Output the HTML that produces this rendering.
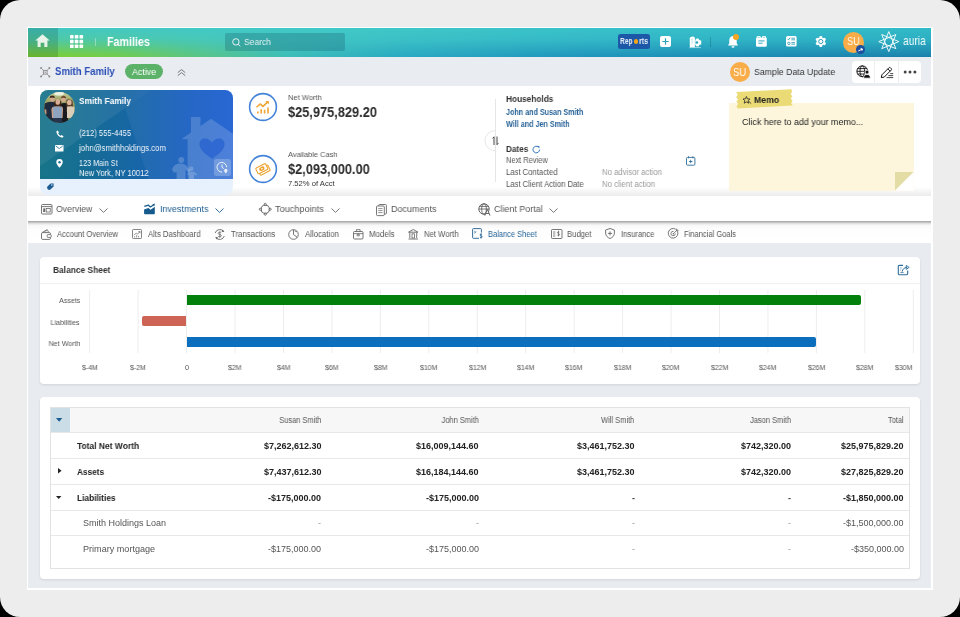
<!DOCTYPE html>
<html><head><meta charset="utf-8">
<style>
*{box-sizing:border-box}
html,body{margin:0;padding:0}
body{width:960px;height:617px;overflow:hidden;background:#000;font-family:"Liberation Sans",sans-serif;position:relative}
.a{position:absolute}
.t{position:absolute;white-space:nowrap;line-height:1;will-change:transform}
svg{position:absolute;overflow:visible}
</style></head>
<body>
<div class="a" style="left:0;top:0;width:960px;height:617px;background:#ededed;border-radius:20px"></div><div class="a" style="left:27px;top:27px;width:906px;height:563px;background:#fff"></div><div class="a" style="left:28px;top:28px;width:903px;height:560px;background:#e8ebf0"></div><div class="a" style="left:28px;top:28px;width:903px;height:29px;background:linear-gradient(90deg,#80d02c 0px,#74cc48 90px,#58c48a 180px,#3cbdb8 260px,#2aa8c2 380px,#1f94bc 560px,#1a80ac 903px)"></div><div class="a" style="left:28px;top:28px;width:903px;height:29px;background:linear-gradient(90deg,#44c8c2 0px,#42c8c6 300px,#38c0ca 600px,#32bac8 903px);-webkit-mask-image:linear-gradient(180deg,#000 0%,rgba(0,0,0,0.8) 40%,rgba(0,0,0,0) 100%);mask-image:linear-gradient(180deg,#000 0%,rgba(0,0,0,0.8) 40%,rgba(0,0,0,0) 100%)"></div><div class="a" style="left:28px;top:28px;width:30px;height:29px;background:rgba(0,40,30,0.16)"></div><svg style="left:35px;top:34.2px" width="15" height="13.5" viewBox="0 0 15 14"><path d="M7.5 0.3 L15 6.8 L12.6 6.8 L12.6 13.6 L9.4 13.6 L9.4 9.2 L5.6 9.2 L5.6 13.6 L2.4 13.6 L2.4 6.8 L0 6.8 Z" fill="#e8f4ea"/></svg><svg style="left:70.2px;top:35.4px" width="13" height="13"><rect x="0.00" y="0.00" width="3.6" height="3.6" rx="0.7" fill="#fff"/><rect x="0.00" y="4.75" width="3.6" height="3.6" rx="0.7" fill="#fff"/><rect x="0.00" y="9.50" width="3.6" height="3.6" rx="0.7" fill="#fff"/><rect x="4.75" y="0.00" width="3.6" height="3.6" rx="0.7" fill="#fff"/><rect x="4.75" y="4.75" width="3.6" height="3.6" rx="0.7" fill="#fff"/><rect x="4.75" y="9.50" width="3.6" height="3.6" rx="0.7" fill="#fff"/><rect x="9.50" y="0.00" width="3.6" height="3.6" rx="0.7" fill="#fff"/><rect x="9.50" y="4.75" width="3.6" height="3.6" rx="0.7" fill="#fff"/><rect x="9.50" y="9.50" width="3.6" height="3.6" rx="0.7" fill="#fff"/></svg><div class="a" style="left:95px;top:38px;width:1px;height:8px;background:rgba(255,255,255,0.35)"></div><div class="t" style="left:106.75px;top:36.00px;font-size:12.06px;transform:scaleX(0.890);transform-origin:0 0;color:#fff;font-weight:bold;">Families</div><div class="a" style="left:225px;top:33px;width:120px;height:18px;background:rgba(20,80,100,0.26);border-radius:2px"></div><svg style="left:232px;top:37.5px" width="9" height="9" viewBox="0 0 9 9"><circle cx="3.9" cy="3.9" r="3.2" fill="none" stroke="rgba(255,255,255,0.85)" stroke-width="1"/><path d="M6.2 6.2 L8.3 8.3" stroke="rgba(255,255,255,0.85)" stroke-width="1"/></svg><div class="t" style="left:244.00px;top:37.00px;font-size:9.52px;transform:scaleX(0.895);transform-origin:0 0;color:rgba(255,255,255,0.85);">Search</div><div class="a" style="left:618px;top:34px;width:32.4px;height:15.4px;background:#1d58a8;border-radius:2.5px"></div><div class="t" style="left:620.00px;top:37.00px;font-size:8.30px;transform:scaleX(0.804);transform-origin:0 0;color:#e8f0fa;font-weight:bold;">Rep</div><div class="t" style="left:638.90px;top:37.00px;font-size:8.30px;transform:scaleX(0.858);transform-origin:0 0;color:#e8f0fa;font-weight:bold;">rts</div><div class="a" style="left:633.5px;top:39px;width:4.9px;height:4.9px;border-radius:50%;background:#f5a417"></div><div class="a" style="left:660px;top:36px;width:11px;height:11px;background:#fff;border-radius:2px"></div><svg style="left:660px;top:36px" width="11" height="11"><path d="M5.5 2.3V8.7M2.3 5.5H8.7" stroke="#2aa3b8" stroke-width="1.2"/></svg><svg style="left:689px;top:35.5px" width="13" height="12" viewBox="0 0 13 12"><path d="M0.8 11.2 V2.2 C0.8 1.6 1.2 1.1 1.8 0.9 L3.6 0.5 C4.6 0.5 5.9 1.1 5.9 2 V11.2 Z" fill="#fff"/><path d="M2.4 3.6 L3.8 3 M2.4 5.4 L3.8 4.8 M2.4 7.2 L3.8 6.6" stroke="rgba(40,160,180,0.55)" stroke-width="0.7"/><path d="M8.6 2.6 L9.9 2.8 L10.2 3.9 L11.3 4.4 L12.2 4.2 V6.6 L12.2 8.8 L11.3 8.6 L10.2 9.1 L9.9 10.2 L8.6 10.4 L7.2 10.2 L6.3 9 V4 L7.2 2.8 Z" fill="#fff"/><circle cx="7.9" cy="6.5" r="1.3" fill="#22a2b8"/><path d="M0.5 11.6 H11.8" stroke="rgba(255,255,255,0.7)" stroke-width="0.8"/></svg><div class="a" style="left:710px;top:37px;width:1px;height:10px;background:rgba(0,60,80,0.25)"></div><svg style="left:726.5px;top:35px" width="12" height="13" viewBox="0 0 12 13"><path d="M6 1 C3.3 1 2.3 3.2 2.3 5.5 V8.3 L1 10.4 H11 L9.7 8.3 V5.5 C9.7 3.2 8.7 1 6 1 Z" fill="#fff"/><path d="M4.4 11.2 A1.6 1.6 0 0 0 7.6 11.2 Z" fill="#fff"/></svg><div class="a" style="left:732.6px;top:33.6px;width:6.2px;height:6.2px;border-radius:50%;background:#f5a623"></div><svg style="left:756px;top:36.3px" width="11" height="11" viewBox="0 0 11 11"><rect x="0" y="1.6" width="10.8" height="9.2" rx="1.4" fill="#fff"/><path d="M1.2 2.2 V0.6 H4.2 V2.2 M6.6 2.2 V0.6 H9.6 V2.2" stroke="#fff" stroke-width="1" fill="none"/><path d="M2.4 4.9H8.4M2.4 7.2H6.6" stroke="#22a0b8" stroke-width="0.9"/></svg><svg style="left:785.8px;top:36.4px" width="11" height="11" viewBox="0 0 11 11"><rect x="0" y="0" width="10.6" height="10.6" rx="1.5" fill="#fff"/><path d="M1.5 2.8 L2.5 3.8 L4.2 1.8" stroke="#1f98b2" stroke-width="0.9" fill="none"/><path d="M5.4 2.2H9M5.4 3.8H9M5.4 6.6H9M5.4 8.2H9" stroke="#1f98b2" stroke-width="0.8"/><circle cx="2.9" cy="7.4" r="1.2" fill="none" stroke="#1f98b2" stroke-width="0.8"/></svg><svg style="left:814.8px;top:36.3px" width="11.6" height="11" viewBox="-5.8 -5.5 11.6 11"><g fill="#fff"><circle r="4.1"/><g id="tt"><rect x="-1.5" y="-5.5" width="3" height="3" rx="1.1"/></g><use href="#tt" transform="rotate(60)"/><use href="#tt" transform="rotate(120)"/><use href="#tt" transform="rotate(180)"/><use href="#tt" transform="rotate(240)"/><use href="#tt" transform="rotate(300)"/></g><circle r="2.1" fill="none" stroke="#1f98b2" stroke-width="0.9"/></svg><div class="a" style="left:843px;top:31.5px;width:21px;height:21px;border-radius:50%;background:#f9ad48"></div><div class="t" style="left:846.50px;top:36.00px;font-size:10.68px;transform:scaleX(0.876);transform-origin:0 0;color:#fff8ee;">SU</div><div class="a" style="left:856.3px;top:44.6px;width:9px;height:9px;border-radius:50%;background:#1d4fa0"></div><svg style="left:856.3px;top:44.6px" width="9" height="9"><path d="M2.3 6 L6.2 4.1 M4.6 3.4 L6.4 4 L5.9 5.8" stroke="#fff" stroke-width="1" fill="none"/></svg><svg style="left:866px;top:29px" width="45" height="26"><path d="M22.80 2.60 L29.87 19.67 M29.87 5.53 L22.80 22.60 M32.80 12.60 L15.73 19.67 M29.87 19.67 L12.80 12.60 M22.80 22.60 L15.73 5.53 M15.73 19.67 L22.80 2.60 M12.80 12.60 L29.87 5.53 M15.73 5.53 L32.80 12.60 " stroke="#fff" stroke-width="0.9" fill="none" stroke-linejoin="round"/></svg><div class="t" style="left:903.20px;top:35.00px;font-size:11.99px;transform:scaleX(0.855);transform-origin:0 0;color:#f0fbfb;">auria</div><div class="a" style="left:28px;top:57px;width:903px;height:29px;background:#e9ecf1"></div><svg style="left:40px;top:66.5px" width="10.5" height="10.5" viewBox="0 0 10.5 10.5"><path d="M1.2 1.2 L3.6 3.6M9.3 1.2 L6.9 3.6M1.2 9.3 L3.6 6.9M9.3 9.3 L6.9 6.9" stroke="#999" stroke-width="0.9"/><circle cx="1.1" cy="1.1" r="1" fill="#8a8a8a"/><circle cx="9.4" cy="1.1" r="1" fill="#8a8a8a"/><circle cx="1.1" cy="9.4" r="1" fill="#8a8a8a"/><circle cx="9.4" cy="9.4" r="1" fill="#8a8a8a"/><rect x="3.4" y="3.4" width="3.7" height="3.7" fill="none" stroke="#8a8a8a" stroke-width="0.9"/><rect x="4.5" y="4.5" width="1.5" height="1.5" fill="#aaa"/></svg><div class="t" style="left:55.30px;top:66.00px;font-size:11.12px;transform:scaleX(0.863);transform-origin:0 0;color:#2c4fb6;font-weight:bold;">Smith Family</div><div class="a" style="left:125px;top:64.2px;width:37.5px;height:15.3px;border-radius:8px;background:#5db26a"></div><div class="t" style="left:131.70px;top:67.00px;font-size:9.67px;transform:scaleX(0.916);transform-origin:0 0;color:#fff;">Active</div><svg style="left:176.5px;top:68.5px" width="9" height="7"><path d="M0.8 3.6 L4.5 0.6 L8.2 3.6M0.8 6.6 L4.5 3.6 L8.2 6.6" stroke="#777" stroke-width="1" fill="none"/></svg><div class="a" style="left:729.6px;top:61.8px;width:20.6px;height:20.6px;border-radius:50%;background:#f9ad48"></div><div class="t" style="left:733.30px;top:68.00px;font-size:10.39px;transform:scaleX(0.908);transform-origin:0 0;color:#fff;">SU</div><div class="t" style="left:753.75px;top:67.00px;font-size:9.67px;transform:scaleX(0.906);transform-origin:0 0;color:#333;">Sample Data Update</div><div class="a" style="left:852px;top:60.7px;width:68.7px;height:21.9px;border-radius:4px;background:#fff"></div><div class="a" style="left:874px;top:61px;width:1px;height:21.6px;background:#eceef2"></div><div class="a" style="left:898.3px;top:61px;width:1px;height:21.6px;background:#eceef2"></div><svg style="left:856px;top:65px" width="15" height="13" viewBox="0 0 15 13"><circle cx="6.3" cy="6.3" r="5.4" fill="none" stroke="#111" stroke-width="1"/><ellipse cx="6.3" cy="6.3" rx="2.3" ry="5.4" fill="none" stroke="#111" stroke-width="0.9"/><path d="M0.9 6.3H11.7M1.6 3.6H11M1.6 9H8" stroke="#111" stroke-width="0.9"/><path d="M7.6 13.2 C7.6 10.4 9.1 9.5 11 9.5 C12.9 9.5 14.4 10.4 14.4 13.2 Z" fill="#111" stroke="#fff" stroke-width="0.8"/><circle cx="11" cy="7.1" r="2" fill="#111" stroke="#fff" stroke-width="0.8"/></svg><svg style="left:879.5px;top:65.5px" width="14" height="13" viewBox="0 0 14 13"><path d="M1.3 11.6 L1.9 8.8 L8.9 1.8 C9.4 1.3 10 1.3 10.5 1.8 L11.2 2.5 C11.7 3 11.7 3.6 11.2 4.1 L4.2 11.1 Z M7.8 2.9 L10.1 5.2" stroke="#111" stroke-width="1" fill="none" stroke-linejoin="round"/><path d="M10.2 7.6H13.2M8.4 9.6H13.2M6.6 11.6H13.2" stroke="#222" stroke-width="0.85"/></svg><svg style="left:902.5px;top:70px" width="14" height="4"><circle cx="2.2" cy="1.9" r="1.5" fill="#444"/><circle cx="7" cy="1.9" r="1.5" fill="#444"/><circle cx="11.9" cy="1.9" r="1.5" fill="#444"/></svg><div class="a" style="left:28px;top:86px;width:903px;height:110px;background:linear-gradient(180deg,#fff 0,#fff 101px,#f6f6f6 105px,#ebebeb 110px)"></div><div class="a" style="left:40px;top:89.6px;width:193px;height:105.6px;border-radius:8px;background:#e7f1fd;overflow:hidden"><div class="a" style="left:0;top:0;width:193px;height:89.2px;background:linear-gradient(90deg,#177488 0%,#16689e 40%,#1a5fc0 75%,#1e5fd2 100%)"></div><svg style="left:0;top:0" width="193" height="90"><path d="M0 0 L112 0 L0 76 Z" fill="rgba(255,255,255,0.07)"/><path d="M85 18 L112 0 L193 0 L193 90 L109 90 Z" fill="rgba(255,255,255,0.05)"/></svg></div><svg style="left:172px;top:117px" width="61" height="62" viewBox="0 0 61 62"><path d="M9.2 22.2 L19 15.5 V0 H28.5 V8.9 L39 1.8 L61 16.8 V62 H15.6 V22.2 Z" fill="rgba(255,255,255,0.17)"/><path d="M40 42 C33 36.5 27.5 33 27.5 27 C27.5 23.6 30.2 21.6 33.2 21.6 C36.2 21.6 38.4 23.4 40 25.6 C41.6 23.4 43.8 21.6 46.8 21.6 C49.8 21.6 52.5 23.6 52.5 27 C52.5 33 47 36.5 40 42 Z" fill="rgba(25,85,205,0.55)"/><circle cx="9.3" cy="43" r="3" fill="rgba(255,255,255,0.2)"/><path d="M0 52.5 C1.5 48.2 4.6 46.6 8.6 46.6 C12.4 46.6 14.4 48.6 16.4 51.4 L18.6 53.8 L17 55.4 L13.6 52.8 V62 H4.6 V55.2 L1.6 55.4 Z" fill="rgba(255,255,255,0.2)"/><circle cx="19.2" cy="51.8" r="2.3" fill="rgba(255,255,255,0.2)"/><path d="M15 57.2 L17.2 54.8 H22 L25.2 57.2 L24.2 58.4 L22 57.2 V62 H17 V58.2 Z" fill="rgba(255,255,255,0.2)"/></svg><div class="a" style="left:214px;top:158.8px;width:16.6px;height:16.8px;border-radius:2.5px;background:rgba(255,255,255,0.22)"></div><svg style="left:216px;top:161px" width="13" height="13" viewBox="0 0 13 13"><path d="M10.6 6.2 A4.8 4.8 0 1 0 6.2 11" fill="none" stroke="rgba(255,255,255,0.85)" stroke-width="1"/><path d="M6 3.4 V6.3 L7.8 7.6" stroke="rgba(255,255,255,0.85)" stroke-width="1" fill="none"/><path d="M9.8 12.4 C8.6 11 8.1 10.2 8.1 9.4 A1.7 1.7 0 0 1 11.5 9.4 C11.5 10.2 11 11 9.8 12.4 Z" fill="rgba(255,255,255,0.85)"/></svg><svg style="left:44px;top:91.9px" width="31" height="31" viewBox="0 0 31 31"><defs><clipPath id="pc"><circle cx="15.45" cy="15.45" r="15.45"/></clipPath><linearGradient id="bg1" x1="0" y1="0" x2="0" y2="1"><stop offset="0" stop-color="#d6dcb8"/><stop offset="0.25" stop-color="#a4ac6c"/><stop offset="0.6" stop-color="#848e52"/><stop offset="1" stop-color="#6a7448"/></linearGradient></defs>
<g clip-path="url(#pc)"><g><rect x="-2" y="-2" width="35" height="35" fill="url(#bg1)"/>
<ellipse cx="15" cy="1" rx="5" ry="2.6" fill="#eef0e0"/>
<path d="M0.4 11.4 Q4 9.6 8.4 9.8 Q11.6 10 12 12 L12 31 H0 Z" fill="#1f2b3c"/>
<path d="M0.4 18 L2.2 17 L2.6 22 L1 22.6 Z" fill="#c49a80"/>
<ellipse cx="8.2" cy="6.8" rx="2.5" ry="2.9" fill="#d0a68c"/><path d="M5.6 6 Q5.8 3.6 8.2 3.6 Q10.8 3.6 10.9 6 Q8.2 4.8 5.6 6 Z" fill="#3a281c"/>
<ellipse cx="19.4" cy="7.1" rx="2.5" ry="2.9" fill="#d2a88e"/><path d="M16.8 6.4 Q17 3.8 19.4 3.8 Q22 3.8 22.1 6.4 Q19.4 5 16.8 6.4 Z" fill="#6a4a2c"/>
<path d="M16.6 11.8 Q20 10.4 24 11.6 L24 31 H16.6 Z" fill="#191b21"/>
<path d="M22.4 8 Q25.6 6.2 28.6 8.8 L29.4 20 H22.6 Z" fill="#5e4230"/>
<ellipse cx="25.3" cy="10.4" rx="2.3" ry="2.7" fill="#dcb49a"/>
<path d="M23 14.8 Q26.6 13.6 30.4 15 L31 26 H23 Z" fill="#dccdb8"/>
<path d="M10.4 9.4 Q13.8 5.8 17.2 9.4 L17.4 17 H10.2 Z" fill="#3e271a"/>
<ellipse cx="13.8" cy="9.9" rx="2.3" ry="2.8" fill="#d8ae94"/>
<path d="M7.4 17 Q8 14.6 10 14.4 L17.6 14.4 Q19 14.6 19 17 L18.6 26 H8 Z" fill="#c9a08a"/>
<path d="M9 15.2 Q13.8 13.8 18 15.2 L17.8 26.2 H9.4 Z" fill="#8ea3bf"/>
<path d="M9.2 26 H18 L18.2 33 H9.2 Z" fill="#28344c"/>
</g></g></svg><div class="t" style="left:78.90px;top:96.00px;font-size:9.81px;transform:scaleX(0.853);transform-origin:0 0;color:#fff;font-weight:bold;">Smith Family</div><div class="t" style="left:78.90px;top:129.00px;font-size:9.23px;transform:scaleX(0.826);transform-origin:0 0;color:#f2f6fb;">(212) 555-4455</div><div class="t" style="left:79.09px;top:144.00px;font-size:9.23px;transform:scaleX(0.842);transform-origin:0 0;color:#f2f6fb;">john@smithholdings.com</div><div class="t" style="left:78.90px;top:159.00px;font-size:9.23px;transform:scaleX(0.786);transform-origin:0 0;color:#f2f6fb;">123 Main St</div><div class="t" style="left:78.90px;top:169.00px;font-size:9.23px;transform:scaleX(0.818);transform-origin:0 0;color:#f2f6fb;">New York, NY 10012</div><svg style="left:55.5px;top:130px" width="8" height="8" viewBox="0 0 8 8"><path d="M1.6 0.4 L3 2.3 L2.2 3.2 C2.7 4.4 3.6 5.3 4.8 5.8 L5.7 5 L7.6 6.4 L6.8 7.6 C3.5 7.6 0.4 4.5 0.4 1.2 Z" fill="#fff"/></svg><svg style="left:55px;top:145px" width="8.5" height="6.5" viewBox="0 0 8.5 6.5"><rect x="0" y="0" width="8.5" height="6.5" rx="0.6" fill="#fff"/><path d="M0.7 0.9 L4.25 3.6 L7.8 0.9" stroke="#1b6e98" stroke-width="0.8" fill="none"/></svg><svg style="left:56px;top:158.8px" width="7" height="9" viewBox="0 0 7 9"><path d="M3.5 8.8 C1.6 6.6 0.3 4.9 0.3 3.3 A3.2 3.2 0 0 1 6.7 3.3 C6.7 4.9 5.4 6.6 3.5 8.8 Z" fill="#fff"/><circle cx="3.5" cy="3.3" r="1.2" fill="#1b6e98"/></svg><svg style="left:47px;top:183px" width="7" height="7" viewBox="0 0 7 7"><path d="M0.4 3.6 L3.6 0.4 H6.6 V3.4 L3.4 6.6 C2.6 7.2 1.6 7 0.8 6.2 C0 5.4 -0.1 4.4 0.4 3.6 Z" fill="#1d5b93"/><circle cx="4.9" cy="2.1" r="0.75" fill="#e9f1fc"/></svg><svg style="left:246.8px;top:91.20px" width="32" height="32"><circle cx="16" cy="16" r="13.4" fill="none" stroke="#4383d8" stroke-width="1.6"/></svg><svg style="left:246.8px;top:153.00px" width="32" height="32"><circle cx="16" cy="16" r="13.4" fill="none" stroke="#4383d8" stroke-width="1.6"/></svg><svg style="left:255px;top:99px" width="16" height="16" viewBox="0 0 16 16"><path d="M1.5 8.2 L5.2 4.9 L8 7.4 L13 2.6" stroke="#f0a431" stroke-width="1.5" fill="none"/><path d="M10.4 2.1 H13.8 V5.5 Z" fill="#f0a431"/><path d="M2.8 12.5V14.6M6.2 10.2V14.6M9.6 10.8V14.6M13 8.6V14.6" stroke="#f0a431" stroke-width="1.6"/></svg><svg style="left:254px;top:161px" width="18" height="16" viewBox="0 0 18 16"><g transform="rotate(-27 9 8)"><rect x="4" y="6.2" width="11" height="6.4" rx="1" fill="#fff" stroke="#f0a431" stroke-width="1.1"/><rect x="2.6" y="4" width="11" height="6.4" rx="1" fill="#fff" stroke="#f0a431" stroke-width="1.1"/><ellipse cx="8.1" cy="7.2" rx="2.9" ry="2" fill="#f0a431"/><circle cx="8.1" cy="7.2" r="0.8" fill="#fff"/></g></svg><div class="t" style="left:287.70px;top:94.00px;font-size:7.78px;transform:scaleX(0.972);transform-origin:0 0;color:#555;">Net Worth</div><div class="t" style="left:287.70px;top:105.00px;font-size:14.90px;transform:scaleX(0.859);transform-origin:0 0;color:#2c2c2c;font-weight:bold;">$25,975,829.20</div><div class="t" style="left:287.70px;top:151.00px;font-size:7.78px;transform:scaleX(0.957);transform-origin:0 0;color:#555;">Available Cash</div><div class="t" style="left:287.70px;top:162.00px;font-size:14.90px;transform:scaleX(0.858);transform-origin:0 0;color:#2c2c2c;font-weight:bold;">$2,093,000.00</div><div class="t" style="left:287.70px;top:180.00px;font-size:7.63px;color:#333;">7.52% of Acct</div><div class="a" style="left:494.8px;top:99px;width:0.8px;height:83px;background:#e6e6e6"></div><svg style="left:484px;top:130px" width="12" height="22"><path d="M11 0.7 A10 10 0 0 0 11 20.7" fill="#fff" stroke="#e3e3e3" stroke-width="0.9"/></svg><svg style="left:491.5px;top:136px" width="7" height="9.5" viewBox="0 0 7 9.5"><path d="M2 9 V0.8 L0.6 2.4M5 0.5 V8.7 L6.4 7.1" stroke="#444" stroke-width="1" fill="none"/></svg><div class="t" style="left:505.60px;top:95.00px;font-size:8.94px;transform:scaleX(0.927);transform-origin:0 0;color:#333;font-weight:bold;">Households</div><div class="t" style="left:505.60px;top:108.00px;font-size:8.79px;transform:scaleX(0.817);transform-origin:0 0;color:#2a6498;font-weight:bold;">John and Susan Smith</div><div class="t" style="left:505.60px;top:120.00px;font-size:8.65px;transform:scaleX(0.831);transform-origin:0 0;color:#2a6498;font-weight:bold;">Will and Jen Smith</div><div class="t" style="left:505.75px;top:145.00px;font-size:8.65px;transform:scaleX(0.944);transform-origin:0 0;color:#333;font-weight:bold;">Dates</div><svg style="left:531.5px;top:144.5px" width="9" height="9" viewBox="0 0 9 9"><path d="M7.6 4.6 A3.3 3.3 0 1 1 6.4 2" fill="none" stroke="#3a7ac0" stroke-width="1"/><path d="M5.2 0.8 L7.6 1.2 L7.2 3.6 Z" fill="#3a7ac0"/></svg><div class="t" style="left:505.75px;top:156.00px;font-size:8.94px;transform:scaleX(0.832);transform-origin:0 0;color:#555;">Next Review</div><div class="t" style="left:505.75px;top:168.00px;font-size:8.94px;transform:scaleX(0.861);transform-origin:0 0;color:#555;">Last Contacted</div><div class="t" style="left:505.75px;top:180.00px;font-size:8.94px;transform:scaleX(0.862);transform-origin:0 0;color:#555;">Last Client Action Date</div><div class="t" style="left:601.75px;top:168.00px;font-size:8.94px;transform:scaleX(0.869);transform-origin:0 0;color:#9a9a9a;">No advisor action</div><div class="t" style="left:601.75px;top:180.00px;font-size:8.94px;transform:scaleX(0.871);transform-origin:0 0;color:#9a9a9a;">No client action</div><svg style="left:685.5px;top:155.8px" width="10" height="10" viewBox="0 0 10 10"><rect x="0.5" y="1.4" width="8.4" height="7.8" rx="1" fill="none" stroke="#2d6c9c" stroke-width="0.9"/><path d="M2.5 0.3V2.3M6.9 0.3V2.3M4.7 3.8V7.2M3 5.5H6.4" stroke="#2d6c9c" stroke-width="0.9"/></svg><div class="a" style="left:729.2px;top:103.25px;width:184.5px;height:87.4px;background:#fdf6dc"></div><svg style="left:895px;top:172px" width="19" height="19"><path d="M0 0 H18.7 L0 18.6 Z" fill="#e3dda5"/><path d="M18.7 0 V18.7 H0 Z" fill="#fff"/></svg><svg style="left:735px;top:88.5px" width="58" height="21" viewBox="0 0 58 21"><path d="M1 2.9 L56.5 0.3 L57 3.2 L55.6 5 L57.4 7.3 L55.8 9.5 L57.6 11.8 L56.2 14.2 L57.8 16.6 L2.6 19.6 L1.6 17 L3.2 15 L1.4 12.6 L3 10.4 L1.2 8 L2.8 5.6 Z" fill="#ebdb76"/></svg><svg style="left:742.5px;top:96px" width="8.5" height="8" viewBox="0 0 8.5 8"><path d="M3.4 0.5 L4.4 2.8 L6.9 3 L5 4.7 L5.6 7.2 L3.4 5.9 L1.2 7.2 L1.8 4.7 L0 3 L2.5 2.8 Z" fill="none" stroke="#222" stroke-width="0.8"/><path d="M5.6 5.2 L8.2 7.6" stroke="#222" stroke-width="0.8"/></svg><div class="t" style="left:753.50px;top:95.00px;font-size:9.67px;transform:scaleX(0.902);transform-origin:0 0;color:#222;font-weight:bold;">Memo</div><div class="t" style="left:742.30px;top:118.00px;font-size:9.08px;transform:scaleX(0.980);transform-origin:0 0;color:#222;">Click here to add your memo...</div><div class="a" style="left:28px;top:196px;width:903px;height:26px;background:#fff"></div><div class="a" style="left:28px;top:221.4px;width:903px;height:3.6px;background:linear-gradient(180deg,#a0a0a0 0%,#bdbdbd 30%,#e2e2e2 65%,#f5f5f5 100%)"></div><div class="a" style="left:28px;top:224.5px;width:903px;height:18.7px;background:linear-gradient(180deg,#f7f7f7 0,#fdfdfd 4px,#fff 100%)"></div><svg style="left:41px;top:204px" width="11.5" height="10.5" viewBox="0 0 11.5 10.5"><rect x="0.5" y="0.5" width="10.5" height="9.5" rx="1" fill="none" stroke="#666" stroke-width="0.9"/><path d="M0.5 2.6H11" stroke="#666" stroke-width="0.9"/><rect x="2.2" y="4.4" width="2" height="3.6" fill="#666"/><rect x="5.2" y="4.4" width="4" height="3.6" fill="none" stroke="#666" stroke-width="0.8"/></svg><div class="t" style="left:56.00px;top:204.00px;font-size:9.45px;transform:scaleX(0.924);transform-origin:0 0;color:#555;">Overview</div><svg style="left:99px;top:207.8px" width="9" height="5.4"><path d="M0.5 0.5 L4.5 4.4 L8.5 0.5" stroke="#666" stroke-width="0.9" fill="none"/></svg><svg style="left:140px;top:200px" width="20" height="18" viewBox="0 0 20 18"><path d="M4.1 9.4 L8.4 8.1 L10.6 9.7 L14.8 6.8 V13.2 C14.8 13.9 14.4 14.3 13.7 14.3 H5.2 C4.5 14.3 4.1 13.9 4.1 13.2 Z" fill="#155a8c"/><path d="M4.3 6.4 L8.4 5.2 L10.4 7 L14.2 4.4" stroke="#155a8c" stroke-width="1.2" fill="none" stroke-linejoin="round"/><path d="M12.4 4.6 L14.8 3.6 L14.4 6" fill="#155a8c"/></svg><div class="t" style="left:159.50px;top:204.00px;font-size:9.45px;transform:scaleX(0.952);transform-origin:0 0;color:#1a5b90;">Investments</div><svg style="left:215px;top:207.8px" width="9" height="5.4"><path d="M0.5 0.5 L4.5 4.4 L8.5 0.5" stroke="#1f5e96" stroke-width="0.9" fill="none"/></svg><svg style="left:259px;top:203.2px" width="12.5" height="12.5" viewBox="0 0 12.5 12.5"><path d="M6.25 1.5 L11 6.25 L6.25 11 L1.5 6.25 Z" fill="none" stroke="#555" stroke-width="0.9" stroke-linejoin="round"/><circle cx="6.25" cy="6.25" r="4.1" fill="#fff" stroke="#555" stroke-width="0.9"/><circle cx="6.25" cy="1.3" r="1.05" fill="#fff" stroke="#555" stroke-width="0.8"/><circle cx="6.25" cy="11.2" r="1.05" fill="#fff" stroke="#555" stroke-width="0.8"/><circle cx="1.3" cy="6.25" r="1.05" fill="#fff" stroke="#555" stroke-width="0.8"/><circle cx="11.2" cy="6.25" r="1.05" fill="#fff" stroke="#555" stroke-width="0.8"/></svg><div class="t" style="left:275.00px;top:204.00px;font-size:9.45px;transform:scaleX(0.967);transform-origin:0 0;color:#555;">Touchpoints</div><svg style="left:331px;top:207.8px" width="9" height="5.4"><path d="M0.5 0.5 L4.5 4.4 L8.5 0.5" stroke="#666" stroke-width="0.9" fill="none"/></svg><svg style="left:375.5px;top:203.5px" width="11" height="12" viewBox="0 0 11 12"><rect x="2.6" y="0.5" width="7.8" height="9.6" rx="1" fill="none" stroke="#666" stroke-width="0.9"/><rect x="0.5" y="2" width="7.8" height="9.6" rx="1" fill="#fff" stroke="#666" stroke-width="0.9"/><path d="M2.2 4.6H6.6M2.2 6.6H6.6M2.2 8.6H6.6" stroke="#666" stroke-width="0.7"/></svg><div class="t" style="left:390.75px;top:204.00px;font-size:9.45px;transform:scaleX(0.952);transform-origin:0 0;color:#555;">Documents</div><svg style="left:477.5px;top:203px" width="13" height="13" viewBox="0 0 13 13"><circle cx="6" cy="6" r="5.2" fill="none" stroke="#555" stroke-width="0.9"/><ellipse cx="6" cy="6" rx="2.3" ry="5.2" fill="none" stroke="#555" stroke-width="0.8"/><path d="M0.8 6H11.2M1.6 3.4H10.4" stroke="#555" stroke-width="0.8"/><path d="M6.8 12.6 L9.4 6.4 L12 12.6 M7.8 10.5H11" stroke="#555" stroke-width="0.9" fill="#fff"/></svg><div class="t" style="left:493.75px;top:204.00px;font-size:9.45px;transform:scaleX(0.947);transform-origin:0 0;color:#555;">Client Portal</div><svg style="left:549px;top:207.8px" width="9" height="5.4"><path d="M0.5 0.5 L4.5 4.4 L8.5 0.5" stroke="#666" stroke-width="0.9" fill="none"/></svg><svg style="left:41px;top:228.5px" width="10.5" height="11" viewBox="0 0 10.5 11"><path d="M1 3.6 L6.2 0.6 L7.6 3.2" stroke="#666" stroke-width="0.8" fill="none"/><path d="M3.4 2.4 L5.8 1.6" stroke="#666" stroke-width="0.7"/><rect x="0.5" y="3.6" width="9" height="6.8" rx="1.2" fill="none" stroke="#666" stroke-width="0.9"/><rect x="6.2" y="5.6" width="4" height="2.8" rx="0.6" fill="#fff" stroke="#666" stroke-width="0.8"/></svg><div class="t" style="left:57.00px;top:230.00px;font-size:8.50px;transform:scaleX(0.890);transform-origin:0 0;color:#555;">Account Overview</div><svg style="left:132px;top:229px" width="10" height="10" viewBox="0 0 10 10"><rect x="0.5" y="0.5" width="9" height="9" rx="0.8" fill="none" stroke="#666" stroke-width="0.8"/><path d="M2 6.2 L4.2 4 L5.6 5.2 L8 2.6 M6.4 2.6H8V4.2" stroke="#666" stroke-width="0.7" fill="none"/><path d="M2.6 8.4V7.2M4.6 8.4V6.2M6.6 8.4V6.8" stroke="#666" stroke-width="0.7"/></svg><div class="t" style="left:148.00px;top:230.00px;font-size:8.50px;transform:scaleX(0.903);transform-origin:0 0;color:#555;">Alts Dashboard</div><svg style="left:213.5px;top:228.6px" width="11.5" height="11" viewBox="0 0 11.5 11"><path d="M9.6 2.4 A4.8 4.8 0 0 0 1.2 4 M1.9 8.6 A4.8 4.8 0 0 0 10.3 7" stroke="#666" stroke-width="0.9" fill="none"/><path d="M8.6 0.4 L10.4 2.8 L7.6 3" fill="#666"/><path d="M2.9 10.6 L1.1 8.2 L3.9 8" fill="#666"/><path d="M7.2 3.6 C6.6 3 4.2 3 4.2 4.4 C4.2 5.8 7.4 5 7.4 6.6 C7.4 8 5 8 4.2 7.4 M5.8 2.4V8.6" stroke="#666" stroke-width="0.8" fill="none"/></svg><div class="t" style="left:230.75px;top:230.00px;font-size:8.50px;transform:scaleX(0.915);transform-origin:0 0;color:#555;">Transactions</div><svg style="left:288px;top:228.8px" width="11" height="11" viewBox="0 0 11 11"><circle cx="5.5" cy="5.5" r="4.8" fill="none" stroke="#666" stroke-width="0.9"/><path d="M5.5 0.7 V5.5 L9.2 8.3" stroke="#666" stroke-width="0.9" fill="none"/><path d="M6.8 2 L8.8 2.8" stroke="#666" stroke-width="0.8"/></svg><div class="t" style="left:305.00px;top:230.00px;font-size:8.50px;transform:scaleX(0.915);transform-origin:0 0;color:#555;">Allocation</div><svg style="left:352.8px;top:228.6px" width="10.5" height="10.5" viewBox="0 0 10.5 10.5"><rect x="0.5" y="2.5" width="9.5" height="7.5" rx="1" fill="none" stroke="#666" stroke-width="0.9"/><path d="M3.4 2.5 V0.6 H7.1 V2.5 M0.5 4.6 H10 M4.2 5.4 H6.3 V6.8 H4.2 Z" stroke="#666" stroke-width="0.8" fill="none"/></svg><div class="t" style="left:368.75px;top:230.00px;font-size:8.50px;transform:scaleX(0.930);transform-origin:0 0;color:#555;">Models</div><svg style="left:408px;top:228.6px" width="10.5" height="10.5" viewBox="0 0 10.5 10.5"><path d="M0.5 3.2 L5.25 0.5 L10 3.2 Z M0.5 10 H10 M1.8 3.6V9M8.7 3.6V9" stroke="#666" stroke-width="0.9" fill="none"/><rect x="4" y="4.8" width="2.5" height="4.2" fill="none" stroke="#666" stroke-width="0.8"/></svg><div class="t" style="left:423.75px;top:230.00px;font-size:8.50px;transform:scaleX(0.905);transform-origin:0 0;color:#555;">Net Worth</div><svg style="left:471.8px;top:228.4px" width="11" height="11" viewBox="0 0 11 11"><path d="M7 10.3 H1.4 C0.9 10.3 0.6 10 0.6 9.5 V1.4 C0.6 0.9 0.9 0.6 1.4 0.6 H8.6 C9.1 0.6 9.4 0.9 9.4 1.4 V4.6" stroke="#1f5f94" stroke-width="0.9" fill="none"/><path d="M2.4 3.2 L3.5 4.2 M2.4 5.4 L4 3.4" stroke="#1f5f94" stroke-width="0.8"/><path d="M10 6.4 C9.6 6 8 6 8 7 C8 8 10.2 7.6 10.2 8.8 C10.2 9.8 8.6 9.8 7.9 9.3 M9.05 5.4V10.6" stroke="#1f5f94" stroke-width="0.8" fill="none"/></svg><div class="t" style="left:488.25px;top:230.00px;font-size:8.50px;transform:scaleX(0.881);transform-origin:0 0;color:#1f5f94;">Balance Sheet</div><svg style="left:550.5px;top:229.2px" width="11.5" height="10" viewBox="0 0 11.5 10"><rect x="0.5" y="0.5" width="10.5" height="9" rx="0.8" fill="none" stroke="#666" stroke-width="0.9"/><path d="M2 3H4.4M2 5H4.4M2 7H4.4" stroke="#666" stroke-width="0.8"/><path d="M8.4 3 C8 2.6 6.4 2.6 6.4 3.6 C6.4 4.6 8.6 4.4 8.6 5.6 C8.6 6.6 7 6.6 6.3 6.1 M7.5 1.8V7.4" stroke="#666" stroke-width="0.8" fill="none"/></svg><div class="t" style="left:566.75px;top:230.00px;font-size:8.50px;transform:scaleX(0.909);transform-origin:0 0;color:#555;">Budget</div><svg style="left:605px;top:228.4px" width="10" height="11" viewBox="0 0 10 11"><path d="M5 0.5 L9.4 2 V5 C9.4 7.8 7.4 9.6 5 10.5 C2.6 9.6 0.6 7.8 0.6 5 V2 Z" fill="none" stroke="#666" stroke-width="0.9"/><path d="M5 3.4V7.4M3 5.4H7" stroke="#666" stroke-width="0.9"/></svg><div class="t" style="left:620.75px;top:230.00px;font-size:8.50px;transform:scaleX(0.897);transform-origin:0 0;color:#555;">Insurance</div><svg style="left:667.8px;top:228.4px" width="11.5" height="11" viewBox="0 0 11.5 11"><path d="M9.4 3.2 A4.8 4.8 0 1 1 7.6 1.2" stroke="#666" stroke-width="0.9" fill="none"/><path d="M7.3 5.6 A2.2 2.2 0 1 1 5.6 3.4" stroke="#666" stroke-width="0.8" fill="none"/><circle cx="5.3" cy="5.8" r="0.7" fill="#666"/><path d="M5.4 5.7 L9.6 1.5 M8.4 0.6 V2.7 H10.6" stroke="#666" stroke-width="0.8" fill="none"/></svg><div class="t" style="left:684.25px;top:230.00px;font-size:8.50px;transform:scaleX(0.887);transform-origin:0 0;color:#555;">Financial Goals</div><div class="a" style="left:40px;top:256.9px;width:880.3px;height:127.1px;background:#fff;border-radius:4px;box-shadow:0 1px 2.5px rgba(0,0,0,0.1)"></div><div class="t" style="left:52.90px;top:266.00px;font-size:9.08px;transform:scaleX(0.924);transform-origin:0 0;color:#333;font-weight:bold;">Balance Sheet</div><div class="a" style="left:40px;top:283px;width:880.3px;height:1px;background:#f1f1f1"></div><svg style="left:897px;top:263px" width="14" height="13" viewBox="0 0 14 13"><path d="M6 2.4 H2.4 C1.6 2.4 1.3 2.8 1.3 3.5 V10.6 C1.3 11.3 1.6 11.7 2.4 11.7 H9.6 C10.3 11.7 10.7 11.3 10.7 10.6 V7.6" stroke="#2d6c9c" stroke-width="1.1" fill="none"/><path d="M3.4 5 H4.6 M3.4 7 H4 M3.4 9.6 H6.6" stroke="#2d6c9c" stroke-width="0.8"/><path d="M5.2 8.6 C5.6 6 7.4 4.4 10.2 4.4" stroke="#2d6c9c" stroke-width="1" fill="none"/><path d="M9.2 2.4 L12.2 4.4 L9.2 6.4 Z" fill="none" stroke="#2d6c9c" stroke-width="0.9" stroke-linejoin="round"/></svg><svg style="left:40px;top:289.7px" width="880" height="63"><rect x="49.20" y="0" width="0.9" height="63" fill="#ebebeb"/><rect x="97.65" y="0" width="0.9" height="63" fill="#ebebeb"/><rect x="146.10" y="0" width="0.9" height="63" fill="#ebebeb"/><rect x="194.55" y="0" width="0.9" height="63" fill="#ebebeb"/><rect x="243.00" y="0" width="0.9" height="63" fill="#ebebeb"/><rect x="291.45" y="0" width="0.9" height="63" fill="#ebebeb"/><rect x="339.90" y="0" width="0.9" height="63" fill="#ebebeb"/><rect x="388.35" y="0" width="0.9" height="63" fill="#ebebeb"/><rect x="436.80" y="0" width="0.9" height="63" fill="#ebebeb"/><rect x="485.25" y="0" width="0.9" height="63" fill="#ebebeb"/><rect x="533.70" y="0" width="0.9" height="63" fill="#ebebeb"/><rect x="582.15" y="0" width="0.9" height="63" fill="#ebebeb"/><rect x="630.60" y="0" width="0.9" height="63" fill="#ebebeb"/><rect x="679.05" y="0" width="0.9" height="63" fill="#ebebeb"/><rect x="727.50" y="0" width="0.9" height="63" fill="#ebebeb"/><rect x="775.95" y="0" width="0.9" height="63" fill="#ebebeb"/><rect x="824.40" y="0" width="0.9" height="63" fill="#ebebeb"/><rect x="872.85" y="0" width="0.9" height="63" fill="#ebebeb"/></svg><div class="a" style="left:186.50px;top:295.4px;width:674.08px;height:9.7px;background:#037f0c;border-radius:0 2px 2px 0"></div><div class="a" style="left:141.68px;top:316.3px;width:44.22px;height:9.6px;background:#cd6456;border-radius:2px 0 0 2px"></div><div class="a" style="left:186.50px;top:337.4px;width:629.26px;height:9.7px;background:#0b6fbd;border-radius:0 2px 2px 0"></div><div class="t" style="left:57.64px;top:297.00px;font-size:7.45px;transform:scaleX(0.950);transform-origin:100% 0;color:#555;">Assets</div><div class="t" style="left:49.36px;top:319.00px;font-size:7.45px;transform:scaleX(0.950);transform-origin:100% 0;color:#555;">Liabilities</div><div class="t" style="left:46.60px;top:340.00px;font-size:7.45px;transform:scaleX(0.950);transform-origin:100% 0;color:#555;">Net Worth</div><div class="t" style="left:81.70px;top:364.00px;font-size:7.30px;transform:scaleX(0.950);transform-origin:0 0;color:#555;">$-4M</div><div class="t" style="left:130.15px;top:364.00px;font-size:7.30px;transform:scaleX(0.950);transform-origin:0 0;color:#555;">$-2M</div><div class="t" style="left:184.57px;top:364.00px;font-size:7.30px;transform:scaleX(0.950);transform-origin:0 0;color:#555;">0</div><div class="t" style="left:228.21px;top:364.00px;font-size:7.30px;transform:scaleX(0.950);transform-origin:0 0;color:#555;">$2M</div><div class="t" style="left:276.66px;top:364.00px;font-size:7.30px;transform:scaleX(0.950);transform-origin:0 0;color:#555;">$4M</div><div class="t" style="left:325.11px;top:364.00px;font-size:7.30px;transform:scaleX(0.950);transform-origin:0 0;color:#555;">$6M</div><div class="t" style="left:373.56px;top:364.00px;font-size:7.30px;transform:scaleX(0.950);transform-origin:0 0;color:#555;">$8M</div><div class="t" style="left:420.08px;top:364.00px;font-size:7.30px;transform:scaleX(0.950);transform-origin:0 0;color:#555;">$10M</div><div class="t" style="left:468.53px;top:364.00px;font-size:7.30px;transform:scaleX(0.950);transform-origin:0 0;color:#555;">$12M</div><div class="t" style="left:516.98px;top:364.00px;font-size:7.30px;transform:scaleX(0.950);transform-origin:0 0;color:#555;">$14M</div><div class="t" style="left:565.43px;top:364.00px;font-size:7.30px;transform:scaleX(0.950);transform-origin:0 0;color:#555;">$16M</div><div class="t" style="left:613.88px;top:364.00px;font-size:7.30px;transform:scaleX(0.950);transform-origin:0 0;color:#555;">$18M</div><div class="t" style="left:662.33px;top:364.00px;font-size:7.30px;transform:scaleX(0.950);transform-origin:0 0;color:#555;">$20M</div><div class="t" style="left:710.78px;top:364.00px;font-size:7.30px;transform:scaleX(0.950);transform-origin:0 0;color:#555;">$22M</div><div class="t" style="left:759.23px;top:364.00px;font-size:7.30px;transform:scaleX(0.950);transform-origin:0 0;color:#555;">$24M</div><div class="t" style="left:807.68px;top:364.00px;font-size:7.30px;transform:scaleX(0.950);transform-origin:0 0;color:#555;">$26M</div><div class="t" style="left:856.13px;top:364.00px;font-size:7.30px;transform:scaleX(0.950);transform-origin:0 0;color:#555;">$28M</div><div class="t" style="left:895.13px;top:364.00px;font-size:7.30px;transform:scaleX(0.950);transform-origin:0 0;color:#555;">$30M</div><div class="a" style="left:40px;top:396.8px;width:880px;height:182px;background:#fff;border-radius:4px;box-shadow:0 1px 2.5px rgba(0,0,0,0.1)"></div><div class="a" style="left:50px;top:407px;width:860px;height:162px;border:1px solid #e2e2e2;background:#fff"></div><div class="a" style="left:51px;top:408px;width:858px;height:24.3px;background:#f7f7f7"></div><div class="a" style="left:51px;top:408px;width:19.1px;height:24.3px;background:#cbdee8"></div><svg style="left:56.2px;top:418.2px" width="6.5" height="4"><path d="M0 0 H6.3 L3.15 3.7 Z" fill="#1b5c90"/></svg><div class="a" style="left:51px;top:431.8px;width:858px;height:1px;background:#e8e8e8"></div><div class="a" style="left:51px;top:458.0px;width:858px;height:1px;background:#e8e8e8"></div><div class="a" style="left:51px;top:483.9px;width:858px;height:1px;background:#e8e8e8"></div><div class="a" style="left:51px;top:509.7px;width:858px;height:1px;background:#e8e8e8"></div><div class="a" style="left:51px;top:535.2px;width:858px;height:1px;background:#e8e8e8"></div><div class="t" style="left:273.58px;top:416.00px;font-size:8.40px;transform:scaleX(0.890);transform-origin:100% 0;color:#555;">Susan Smith</div><div class="t" style="left:436.88px;top:416.00px;font-size:8.40px;transform:scaleX(0.890);transform-origin:100% 0;color:#555;">John Smith</div><div class="t" style="left:597.17px;top:416.00px;font-size:8.40px;transform:scaleX(0.890);transform-origin:100% 0;color:#555;">Will Smith</div><div class="t" style="left:744.68px;top:416.00px;font-size:8.40px;transform:scaleX(0.890);transform-origin:100% 0;color:#555;">Jason Smith</div><div class="t" style="left:885.86px;top:416.00px;font-size:8.40px;transform:scaleX(0.890);transform-origin:100% 0;color:#555;">Total</div><div class="t" style="left:77.10px;top:442.00px;font-size:9.00px;transform:scaleX(0.939);transform-origin:0 0;color:#222;font-weight:bold;">Total Net Worth</div><div class="t" style="left:263.65px;top:442.00px;font-size:9.00px;color:#222;font-weight:bold;">$7,262,612.30</div><div class="t" style="left:416.34px;top:442.00px;font-size:9.00px;color:#222;font-weight:bold;">$16,009,144.60</div><div class="t" style="left:576.95px;top:442.00px;font-size:9.00px;color:#222;font-weight:bold;">$3,461,752.30</div><div class="t" style="left:740.85px;top:442.00px;font-size:9.00px;color:#222;font-weight:bold;">$742,320.00</div><div class="t" style="left:841.04px;top:442.00px;font-size:9.00px;color:#222;font-weight:bold;">$25,975,829.20</div><div class="t" style="left:77.10px;top:468.00px;font-size:9.00px;transform:scaleX(0.918);transform-origin:0 0;color:#222;font-weight:bold;">Assets</div><svg style="left:57.5px;top:468.4px" width="4" height="6"><path d="M0 0 V5.6 L3.6 2.8 Z" fill="#222"/></svg><div class="t" style="left:263.65px;top:468.00px;font-size:9.00px;color:#222;font-weight:bold;">$7,437,612.30</div><div class="t" style="left:416.34px;top:468.00px;font-size:9.00px;color:#222;font-weight:bold;">$16,184,144.60</div><div class="t" style="left:576.95px;top:468.00px;font-size:9.00px;color:#222;font-weight:bold;">$3,461,752.30</div><div class="t" style="left:740.85px;top:468.00px;font-size:9.00px;color:#222;font-weight:bold;">$742,320.00</div><div class="t" style="left:841.04px;top:468.00px;font-size:9.00px;color:#222;font-weight:bold;">$27,825,829.20</div><div class="t" style="left:76.80px;top:494.00px;font-size:9.00px;transform:scaleX(0.930);transform-origin:0 0;color:#222;font-weight:bold;">Liabilities</div><svg style="left:56.2px;top:496.1px" width="6" height="4"><path d="M0 0 H5.4 L2.7 3 Z" fill="#222"/></svg><div class="t" style="left:268.15px;top:494.00px;font-size:9.00px;color:#222;font-weight:bold;">-$175,000.00</div><div class="t" style="left:425.85px;top:494.00px;font-size:9.00px;color:#222;font-weight:bold;">-$175,000.00</div><div class="t" style="left:631.50px;top:494.00px;font-size:9.00px;color:#444;font-weight:bold;">-</div><div class="t" style="left:787.90px;top:494.00px;font-size:9.00px;color:#444;font-weight:bold;">-</div><div class="t" style="left:843.05px;top:494.00px;font-size:9.00px;color:#222;font-weight:bold;">-$1,850,000.00</div><div class="t" style="left:83.00px;top:519.00px;font-size:9.00px;color:#555;">Smith Holdings Loan</div><div class="t" style="left:318.20px;top:519.00px;font-size:9.00px;color:#999;">-</div><div class="t" style="left:475.90px;top:519.00px;font-size:9.00px;color:#999;">-</div><div class="t" style="left:631.50px;top:519.00px;font-size:9.00px;color:#999;">-</div><div class="t" style="left:787.90px;top:519.00px;font-size:9.00px;color:#999;">-</div><div class="t" style="left:843.05px;top:519.00px;font-size:9.00px;color:#555;">-$1,500,000.00</div><div class="t" style="left:83.30px;top:545.00px;font-size:9.00px;transform:scaleX(1.009);transform-origin:0 0;color:#555;">Primary mortgage</div><div class="t" style="left:268.15px;top:545.00px;font-size:9.00px;color:#555;">-$175,000.00</div><div class="t" style="left:425.85px;top:545.00px;font-size:9.00px;color:#555;">-$175,000.00</div><div class="t" style="left:631.50px;top:545.00px;font-size:9.00px;color:#999;">-</div><div class="t" style="left:787.90px;top:545.00px;font-size:9.00px;color:#999;">-</div><div class="t" style="left:850.55px;top:545.00px;font-size:9.00px;color:#555;">-$350,000.00</div></body></html>
